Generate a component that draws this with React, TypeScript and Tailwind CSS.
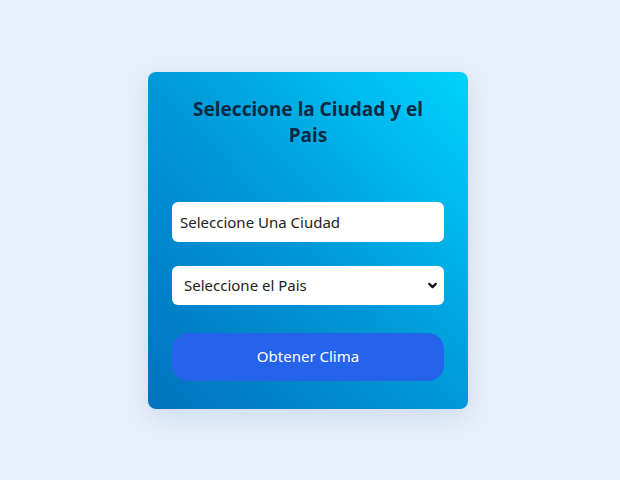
export default function App() {
  return (
    <div
      className="min-h-[480px] w-full flex items-center justify-center pr-[4px] bg-[#e7f0fa]"
      style={{ fontFamily: '"Noto Sans", "Open Sans", sans-serif' }}
    >
      <div className="w-[320px] h-[337px] rounded-lg bg-gradient-to-tr from-[#0272bd] via-[#0199d9] to-[#00d4fd] shadow-[0_8px_24px_rgba(30,80,140,0.12)] px-6 pt-6 pb-7 flex flex-col">
        <h2 className="text-[19px] leading-[26px] font-bold text-[#0d2a45] text-center px-4">
          Seleccione la Ciudad y el Pais
        </h2>

        <form className="flex flex-col mt-[54px]" onSubmit={(e) => e.preventDefault()}>
          <input
            type="text"
            placeholder="Seleccione Una Ciudad"
            className="h-10 rounded-md bg-white px-2 text-[15px] text-[#222] placeholder:text-[#222] focus:outline-none"
          />

          <div className="relative mt-6">
            <select className="appearance-none w-full h-[39px] rounded-md bg-white pl-3 pr-8 text-[15px] text-[#222] focus:outline-none">
              <option>Seleccione el Pais</option>
            </select>
            <svg
              className="absolute right-[6px] top-[14px] pointer-events-none"
              width="11"
              height="11"
              viewBox="0 0 10 10"
              fill="none"
              stroke="#111"
              strokeWidth="2"
              strokeLinecap="round"
              strokeLinejoin="round"
            >
              <path d="M2 3.5 L5 6.5 L8 3.5" />
            </svg>
          </div>

          <button
            type="submit"
            className="mt-7 h-12 rounded-2xl bg-[#2563eb] text-white text-[15px]"
          >
            Obtener Clima
          </button>
        </form>
      </div>
    </div>
  );
}
